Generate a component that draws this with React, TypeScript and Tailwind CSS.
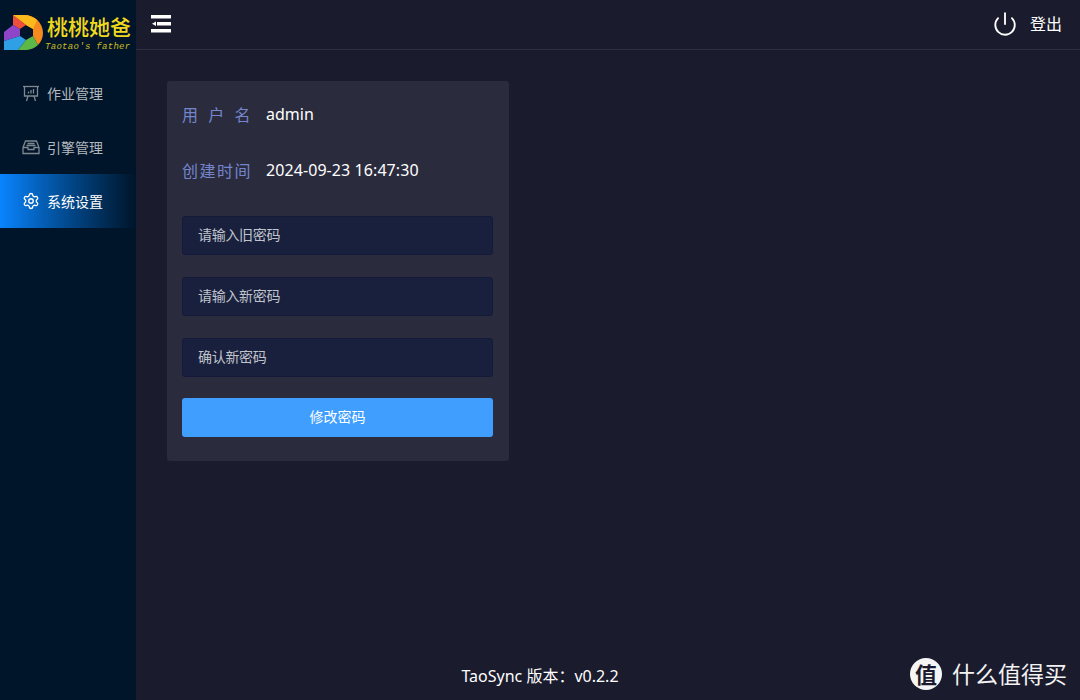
import React from 'react';
import { Settings, Power } from 'lucide-react';

const BoardIcon = ({ className }: { className?: string }) => (
    <svg width="18" height="18" viewBox="0 0 18 18" fill="none" stroke="currentColor" strokeWidth="1.3" className={className}>
        <path d="M1 2.5 H17" />
        <path d="M2.5 2.5 V12 H15.5 V2.5" />
        <path d="M6.5 7.5 V9.5 M9 6 V9.5 M11.5 5 V9.5" />
        <path d="M6 12 L4.5 17 M12 12 L13.5 17" />
    </svg>
);

const TrayIcon = ({ className }: { className?: string }) => (
    <svg width="18" height="18" viewBox="0 0 18 18" fill="none" stroke="currentColor" strokeWidth="1.3" className={className}>
        <path d="M1 9.5 L3.5 3 H14.5 L17 9.5 V15.5 H1 Z" />
        <path d="M1 9.5 H6 V11.5 H12 V9.5 H17" />
        <path d="M5.5 5.5 H12.5 M4.5 7.5 H13.5" />
    </svg>
);

const NAV = [
    { label: '作业管理', icon: BoardIcon },
    { label: '引擎管理', icon: TrayIcon },
    { label: '系统设置', icon: null, active: true },
];

const Logo = () => (
    <svg width="40" height="40" viewBox="0 0 40 40" className="shrink-0">
        {/* D mark, six slices round a hexagon hole */}
        <path d="M9 1 H20 C31 1 39 9 39 19 C39 24 37 28 34 31 L29 22 V15 L22 11 Z" fill="#f58a1f" />
        <path d="M9 1 H20 C25 1 30 3 33 6 L29 15 L22 11 Z" fill="#fbb91e" />
        <path d="M9 1 L22 11 L16 15 L9 11 Z" fill="#ef4e3a" />
        <path d="M9 11 L16 15 V22 L0 27 V18 Z" fill="#8f45c8" />
        <path d="M0 27 L16 22 L22 26 L14 36 H0 Z" fill="#2f9fe6" />
        <path d="M22 26 L29 22 L34 31 C31 34 26 36 20 36 H14 Z" fill="#5cb947" />
    </svg>
);

const HamburgerIcon = () => (
    <svg width="20" height="18" viewBox="0 0 20 18" fill="#fff">
        <rect x="0" y="0" width="20" height="3.5" />
        <rect x="6" y="7" width="14" height="3.5" />
        <path d="M1 8.7 L5 6.5 V11 Z" />
        <rect x="0" y="14" width="20" height="3.5" />
    </svg>
);

const Field = ({ placeholder }: { placeholder: string }) => (
    <div className="h-[39px] flex items-center px-[15px] pb-[2px] bg-[#19203d] border border-[#15193a] rounded-[3px] text-sm tracking-[-0.3px] text-[#c0c4cc]">
        {placeholder}
    </div>
);

export default function App() {
    return (
        <div
            className="relative h-[700px] w-[1080px] flex overflow-hidden bg-[#1a1b2d] text-white"
            style={{ fontFamily: '"Noto Sans", "Noto Sans CJK SC", sans-serif' }}
        >
            <aside className="w-[136px] shrink-0 bg-[#00152a]">
                <div className="h-[66px] pl-1 pt-[14px] flex items-start">
                    <Logo />
                    <div className="ml-[3px] whitespace-nowrap">
                        <div className="text-[21px] leading-[26px] font-medium text-[#f0d91c]">桃桃她爸</div>
                        <div className="mt-[2px] -ml-[2px] text-[9px] leading-[10px] italic text-[#cdbb22] tracking-[0.3px]" style={{ fontFamily: '"Liberation Mono", monospace' }}>
                            Taotao's father
                        </div>
                    </div>
                </div>
                <nav>
                    {NAV.map((item) => {
                        const Icon = item.icon;
                        return (
                            <div
                                key={item.label}
                                className={`h-[54px] flex items-center pl-[22px] gap-[7px] text-sm ${
                                    item.active
                                        ? 'bg-gradient-to-r from-[#0a84ff] to-[#00152a] text-white'
                                        : 'text-[#b4b8bd]'
                                }`}
                            >
                                {Icon ? (
                                    <Icon className="text-[#7f8890]" />
                                ) : (
                                    <Settings size={18} strokeWidth={1.8} className="text-white" />
                                )}
                                <span className="pt-[2px]">{item.label}</span>
                            </div>
                        );
                    })}
                </nav>
            </aside>

            <div className="flex-1 flex flex-col min-w-0">
                <header className="h-[50px] shrink-0 flex items-center justify-between border-b border-[#2e2f3d] pl-[15px] pr-[18px]">
                    <div className="-mt-[2px]">
                        <HamburgerIcon />
                    </div>
                    <div className="flex items-center gap-[12px] -mt-[1px]">
                        <Power size={26} strokeWidth={1.7} />
                        <span className="text-base">登出</span>
                    </div>
                </header>

                <main className="flex-1 pl-[31px] pt-[31px]">
                    <div className="w-[342px] h-[380px] bg-[#2b2b3e] rounded-[3px] pl-[15px] pr-[16px] pt-[22px]">
                        <div className="h-[24px] flex items-center">
                            <span className="w-[84px] text-base text-[#7385cc] tracking-[10.3px] whitespace-nowrap">用户名</span>
                            <span className="text-base -mt-[2px]">admin</span>
                        </div>
                        <div className="h-[24px] mt-[32px] flex items-center">
                            <span className="w-[84px] text-base text-[#7385cc] tracking-[1.5px] whitespace-nowrap">创建时间</span>
                            <span className="text-base tracking-[0.08px] -mt-[2px]">2024-09-23 16:47:30</span>
                        </div>
                        <div className="mt-[33px] flex flex-col gap-[22px]">
                            <Field placeholder="请输入旧密码" />
                            <Field placeholder="请输入新密码" />
                            <Field placeholder="确认新密码" />
                        </div>
                        <button className="mt-[21px] w-full h-[39px] pb-[2px] bg-[#409eff] rounded-[3px] text-sm text-white">
                            修改密码
                        </button>
                    </div>
                </main>

                <footer className="h-[48px] shrink-0 pr-[136px] pt-[12px] text-center text-base">
                    {'TaoSync 版本\uFF1Av0.2.2'}
                </footer>
            </div>

            {/* site watermark sits on top of the page */}
            <div className="absolute left-[910px] top-[658px] flex items-center gap-[10px] text-[#f2f2f2]">
                <div className="w-[32px] h-[32px] rounded-full bg-[#f5f5f5] text-[#1a1b2d] flex items-center justify-center text-[22px] leading-none font-bold">
                    值
                </div>
                <span className="text-[23px] leading-none">什么值得买</span>
            </div>
        </div>
    );
}
